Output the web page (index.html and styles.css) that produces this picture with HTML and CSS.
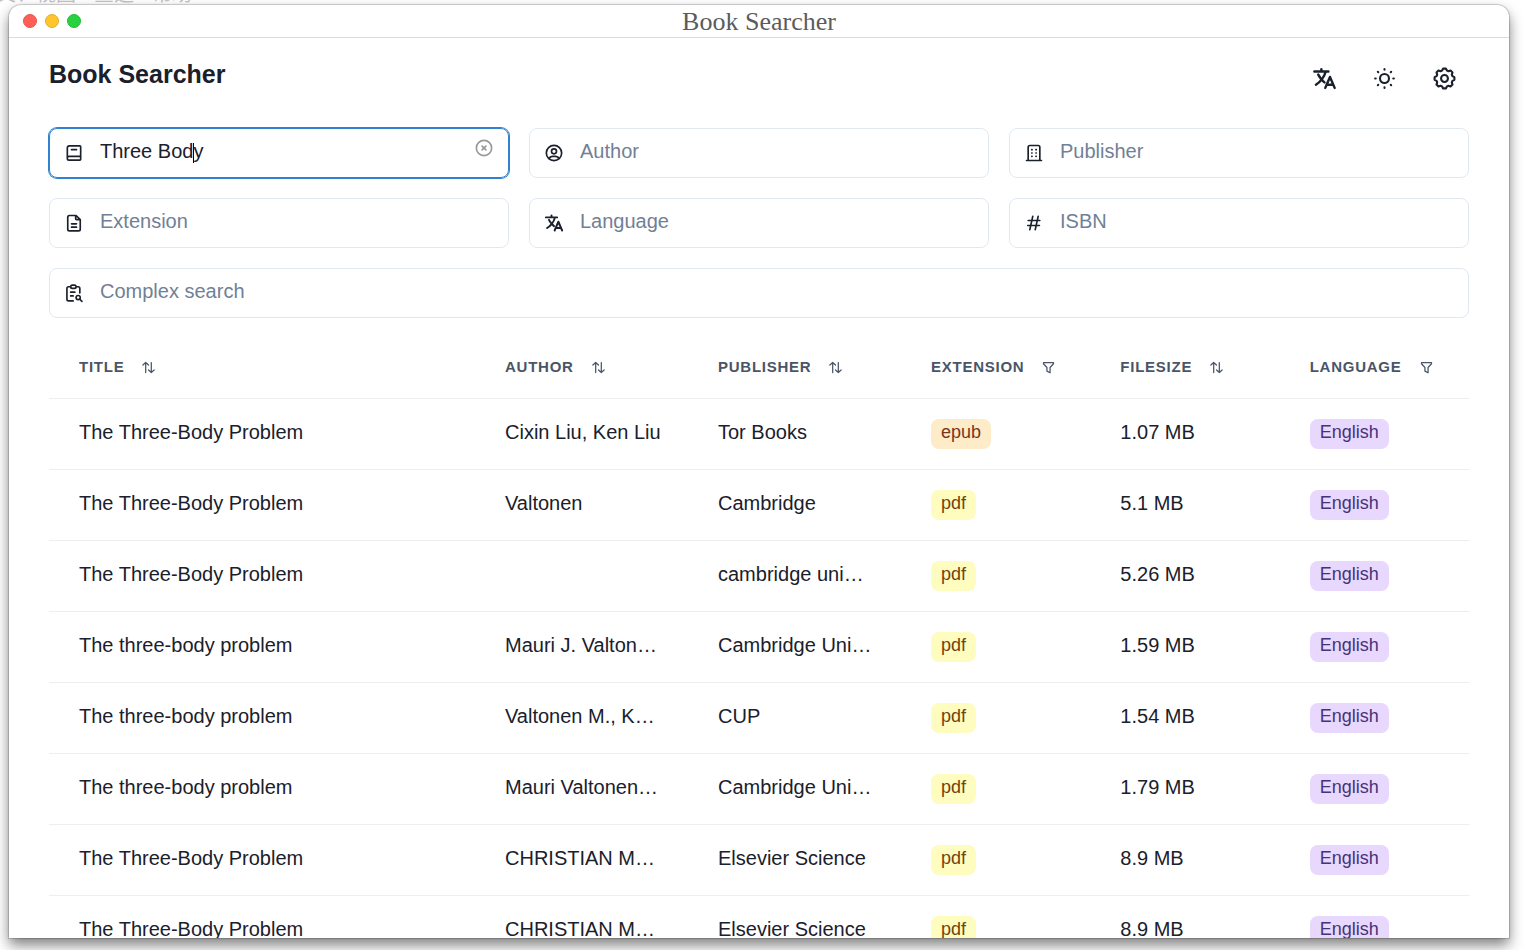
FILE: index.html
```html
<!DOCTYPE html>
<html lang="en">
<head>
<meta charset="utf-8">
<meta name="viewport" content="width=device-width, initial-scale=1">
<title>Book Searcher</title>
<link rel="stylesheet" href="styles.css">
</head>
<body>
<svg class="sprite" aria-hidden="true">
  <symbol id="i-language" viewBox="0 0 512 512"><g stroke-width="50"><path d="M48 112h288M192 64v48M272 448l96-224 96 224M301.500 384h133M281.300 112S257 206 199 277 80 384 80 384"/><path d="M256 336s-35-27-72-75-56-85-56-85"/></g></symbol>
  <symbol id="i-sun" viewBox="0 0 24 24"><circle cx="12" cy="12" r="4.300"/><path d="M3 12h.6M12 3v.6M20.400 12h.6M12 20.400v.6M5.600 5.600l.4.4M18.400 5.600l-.4.4M18 18l.4.4M6 18l-.4.4"/></symbol>
  <symbol id="i-gear" viewBox="0 0 24 24"><path d="M21.500 10.700v2.600L19.600 14.300L19 15.800L19.700 17.800L17.800 19.700L15.800 19L14.300 19.600L13.300 21.500H10.700L9.700 19.600L8.200 19L6.200 19.700L4.300 17.800L5 15.800L4.400 14.300L2.500 13.300V10.700L4.400 9.700L5 8.200L4.300 6.200L6.200 4.300L8.200 5L9.700 4.400L10.700 2.500H13.300L14.300 4.400L15.800 5L17.800 4.300L19.700 6.200L19 8.200L19.600 9.700z"/><circle cx="12" cy="12" r="3.300"/></symbol>
  <symbol id="i-book" viewBox="0 0 24 24"><path d="M19 3.500H6.500a2.500 2.500 0 0 0-2.500 2.500v12.500a2 2 0 0 0 2 2h13a1 1 0 0 0 1-1v-15a1 1 0 0 0-1-1zM20 16H6a2 2 0 0 0-2 2.200M9 8h6"/></symbol>
  <symbol id="i-user" viewBox="0 0 24 24"><circle cx="12" cy="12" r="9.200"/><circle cx="12" cy="10" r="3"/><path d="M6 18.700C6.800 16.800 8 16 10 16h4c2 0 3.200.8 4 2.700"/></symbol>
  <symbol id="i-building" viewBox="0 0 24 24"><path d="M3 21h18M5 21V5a2 2 0 0 1 2-2h10a2 2 0 0 1 2 2v16M9.300 8h.4M9.300 12h.4M9.300 16h.4M14.300 8h.4M14.300 12h.4M14.300 16h.4"/></symbol>
  <symbol id="i-file" viewBox="0 0 24 24"><path d="M14 3v4a1 1 0 0 0 1 1h4.500M17.500 21.500H6.500a2 2 0 0 1-2-2V5a2 2 0 0 1 2-2H14.500l5 5v11.500a2 2 0 0 1-2 2zM9 13h6M9 17h6"/></symbol>
  <symbol id="i-hash" viewBox="0 0 24 24"><path d="M5 9h14M4.500 15h14M10.500 4L7 20M17 4l-3.500 16"/></symbol>
  <symbol id="i-clipboard" viewBox="0 0 24 24"><path d="M8 4.500H5.500a2 2 0 0 0-2 2V19.500a2 2 0 0 0 2 2H11M19 12V6.500a2 2 0 0 0-2-2h-2.500M8 4.500a2 2 0 0 1 2-2h2.500a2 2 0 0 1 2 2 2 2 0 0 1-2 2H10a2 2 0 0 1-2-2zM8 11h5M8 15.500h3"/><circle cx="17" cy="17.500" r="2.500"/><path d="M19 19.500L21.500 22"/></symbol>
  <symbol id="i-clear" viewBox="0 0 24 24"><circle cx="12" cy="12" r="9.200"/><path d="M9.700 9.700l4.600 4.600M14.300 9.700l-4.600 4.600"/></symbol>
  <symbol id="i-sort" viewBox="0 0 24 24"><path d="M3 8l4.500-4L12 8M7.500 4v16M12 16l4.500 4L21 16M16.500 4v16"/></symbol>
  <symbol id="i-filter" viewBox="0 0 24 24"><path d="M4 4h16v2L14.500 12v8.500l-5-2.700V12L4 6z"/></symbol>
</svg>

<div class="menu-strip" aria-hidden="true"><span>文、视图</span><span>查选</span><span>帮助</span></div>

<div class="window">
  <div class="titlebar">
    <div class="lights">
      <button class="light red" aria-label="Close"></button>
      <button class="light yellow" aria-label="Minimize"></button>
      <button class="light green" aria-label="Zoom"></button>
    </div>
    <div class="window-title">Book Searcher</div>
  </div>

  <div class="content">
    <header class="header">
      <h1 class="heading">Book Searcher</h1>
      <div class="actions">
        <button class="action" aria-label="Change language"><svg class="icon"><use href="#i-language"/></svg></button>
        <button class="action" aria-label="Toggle theme"><svg class="icon"><use href="#i-sun"/></svg></button>
        <button class="action" aria-label="Settings"><svg class="icon"><use href="#i-gear"/></svg></button>
      </div>
    </header>

    <form class="search">
      <div class="field active">
        <svg class="icon"><use href="#i-book"/></svg>
        <span class="entry"><input class="input" type="text" aria-label="Title" placeholder="Title" value="Three Body"><span class="caret"></span></span>
        <button class="clear" type="button" aria-label="Clear title"><svg class="icon"><use href="#i-clear"/></svg></button>
      </div>
      <div class="field"><svg class="icon"><use href="#i-user"/></svg><input class="input" type="text" aria-label="Author" placeholder="Author"></div>
      <div class="field"><svg class="icon"><use href="#i-building"/></svg><input class="input" type="text" aria-label="Publisher" placeholder="Publisher"></div>
      <div class="field"><svg class="icon"><use href="#i-file"/></svg><input class="input" type="text" aria-label="Extension" placeholder="Extension"></div>
      <div class="field"><svg class="icon"><use href="#i-language"/></svg><input class="input" type="text" aria-label="Language" placeholder="Language"></div>
      <div class="field"><svg class="icon"><use href="#i-hash"/></svg><input class="input" type="text" aria-label="ISBN" placeholder="ISBN"></div>
      <div class="field wide"><svg class="icon"><use href="#i-clipboard"/></svg><input class="input" type="text" aria-label="Complex search" placeholder="Complex search"></div>
    </form>

    <table class="results">
      <colgroup><col class="col-title"><col class="col-name"><col class="col-name"><col><col><col></colgroup>
      <thead>
        <tr>
          <th scope="col"><div class="th">Title<button class="tool" aria-label="Sort by title"><svg class="icon"><use href="#i-sort"/></svg></button></div></th>
          <th scope="col"><div class="th">Author<button class="tool" aria-label="Sort by author"><svg class="icon"><use href="#i-sort"/></svg></button></div></th>
          <th scope="col"><div class="th">Publisher<button class="tool" aria-label="Sort by publisher"><svg class="icon"><use href="#i-sort"/></svg></button></div></th>
          <th scope="col"><div class="th">Extension<button class="tool" aria-label="Filter by extension"><svg class="icon"><use href="#i-filter"/></svg></button></div></th>
          <th scope="col"><div class="th">Filesize<button class="tool" aria-label="Sort by filesize"><svg class="icon"><use href="#i-sort"/></svg></button></div></th>
          <th scope="col"><div class="th">Language<button class="tool" aria-label="Filter by language"><svg class="icon"><use href="#i-filter"/></svg></button></div></th>
        </tr>
      </thead>
      <tbody>
        <tr><td>The Three-Body Problem</td><td>Cixin Liu, Ken Liu</td><td>Tor Books</td><td class="tag"><span class="badge orange">epub</span></td><td>1.07 MB</td><td class="tag"><span class="badge purple">English</span></td></tr>
        <tr><td>The Three-Body Problem</td><td>Valtonen</td><td>Cambridge</td><td class="tag"><span class="badge lemon">pdf</span></td><td>5.1 MB</td><td class="tag"><span class="badge purple">English</span></td></tr>
        <tr><td>The Three-Body Problem</td><td></td><td>cambridge uni…</td><td class="tag"><span class="badge lemon">pdf</span></td><td>5.26 MB</td><td class="tag"><span class="badge purple">English</span></td></tr>
        <tr><td>The three-body problem</td><td>Mauri J. Valton…</td><td>Cambridge Uni…</td><td class="tag"><span class="badge lemon">pdf</span></td><td>1.59 MB</td><td class="tag"><span class="badge purple">English</span></td></tr>
        <tr><td>The three-body problem</td><td>Valtonen M., K…</td><td>CUP</td><td class="tag"><span class="badge lemon">pdf</span></td><td>1.54 MB</td><td class="tag"><span class="badge purple">English</span></td></tr>
        <tr><td>The three-body problem</td><td>Mauri Valtonen…</td><td>Cambridge Uni…</td><td class="tag"><span class="badge lemon">pdf</span></td><td>1.79 MB</td><td class="tag"><span class="badge purple">English</span></td></tr>
        <tr><td>The Three-Body Problem</td><td>CHRISTIAN M…</td><td>Elsevier Science</td><td class="tag"><span class="badge lemon">pdf</span></td><td>8.9 MB</td><td class="tag"><span class="badge purple">English</span></td></tr>
        <tr><td>The Three-Body Problem</td><td>CHRISTIAN M…</td><td>Elsevier Science</td><td class="tag"><span class="badge lemon">pdf</span></td><td>8.9 MB</td><td class="tag"><span class="badge purple">English</span></td></tr>
      </tbody>
    </table>
  </div>
</div>
</body>
</html>
```
FILE: styles.css
```css
* { box-sizing: border-box; }

body {
  margin: 0;
  height: 100vh;
  overflow: hidden;
  display: flex;
  flex-direction: column;
  padding: 5px 16px 12px 9px;
  background: #fff;
  color: #1a202c;
  font-family: "Liberation Sans", Arial, sans-serif;
  font-size: 20px;
  line-height: 30px;
}

button { border: 0; padding: 0; background: none; color: inherit; font: inherit; }

.sprite { position: absolute; width: 0; height: 0; }

.icon {
  width: 20px;
  height: 20px;
  flex: none;
  display: block;
  fill: none;
  stroke: currentColor;
  stroke-width: 2;
  stroke-linecap: round;
  stroke-linejoin: round;
}

/* Menu of the desktop, mostly hidden above the screen edge */
.menu-strip {
  position: absolute;
  top: -17px;
  left: -4px;
  display: flex;
  gap: 18px;
  font-family: "Noto Sans CJK SC", sans-serif;
  font-size: 20px;
  line-height: 20px;
  color: #c4c4c4;
}

.window {
  position: relative;
  flex: 1;
  min-height: 0;
  display: flex;
  flex-direction: column;
  overflow: hidden;
  background: #fff;
  border-radius: 12px 12px 0 0;
  box-shadow: 0 0 1px 1px rgba(0, 0, 0, .18), 0 7px 14px rgba(0, 0, 0, .5);
}

.titlebar {
  flex: none;
  display: grid;
  grid-template-columns: 1fr auto 1fr;
  align-items: center;
  height: 33px;
  border-bottom: 1px solid #dcdcdc;
}

.lights { display: flex; gap: 8px; padding-left: 14px; }
.light { width: 14px; height: 14px; border-radius: 50%; border: 1px solid; }
.red { background: #ff5f56; border-color: #e8524a; }
.yellow { background: #ffc52c; border-color: #e2ad26; }
.green { background: #27d140; border-color: #22bb38; }

.window-title {
  padding-top: 2px;
  font-family: "Liberation Serif", serif;
  font-size: 26px;
  line-height: 30px;
  color: #5c5c5c;
}

.content { padding: 15px 40px 0; }

.header { display: flex; justify-content: space-between; align-items: flex-start; }
.heading { margin: 0; padding-top: 6px; font-size: 25px; line-height: 30px; font-weight: 700; }
.actions { display: flex; gap: 10px; }
.action { width: 50px; height: 50px; display: grid; place-items: center; }
.action .icon { width: 25px; height: 25px; }

.search {
  display: grid;
  grid-template-columns: repeat(3, 1fr);
  gap: 20px;
  margin-top: 25px;
}

.field {
  position: relative;
  display: flex;
  align-items: center;
  gap: 16px;
  height: 50px;
  padding: 0 14px;
  border: 1px solid #e2e8f0;
  border-radius: 8px;
}
.field.active { border-color: #3182ce; box-shadow: 0 0 0 1px #3182ce; }
.field.wide { grid-column: 1 / -1; }

.entry { position: relative; flex: 1; min-width: 0; display: flex; }
.input {
  flex: 1;
  min-width: 0;
  width: 100%;
  height: 48px;
  border: 0;
  outline: 0;
  padding: 0 0 4px;
  background: transparent;
  color: inherit;
  font: inherit;
}
.input::placeholder { color: #718096; opacity: 1; }

.caret { position: absolute; left: 93px; top: 14px; width: 1px; height: 20px; background: #000; }

.clear { height: 28px; align-self: flex-start; padding-top: 9px; color: #999; }

.results { width: 100%; margin-top: 20px; table-layout: fixed; border-collapse: collapse; }
.col-title { width: 30%; }
.col-name { width: 15%; }

.results th {
  padding: 14px 30px 16px;
  border-bottom: 1px solid #eee;
  text-align: left;
  color: #4a5568;
  font-size: 15px;
  font-weight: 700;
  letter-spacing: .05em;
  text-transform: uppercase;
}
.th { display: flex; align-items: center; gap: 17px; white-space: nowrap; }
.tool .icon { width: 15px; height: 15px; }

.results td {
  height: 71px;
  padding: 18px 0 22px 30px;
  border-bottom: 1px solid #eee;
  white-space: nowrap;
  overflow: hidden;
}
.results td.tag { padding: 20px 0 20px 30px; }

.badge {
  display: block;
  width: fit-content;
  padding: 0 10px 4px;
  border-radius: 8px;
  font-size: 18px;
  line-height: 26px;
}
.orange { background: #feebc8; color: #7b341e; }
.lemon { background: #fefcbf; color: #744210; }
.purple { background: #e9d8fd; color: #44337a; }
```
